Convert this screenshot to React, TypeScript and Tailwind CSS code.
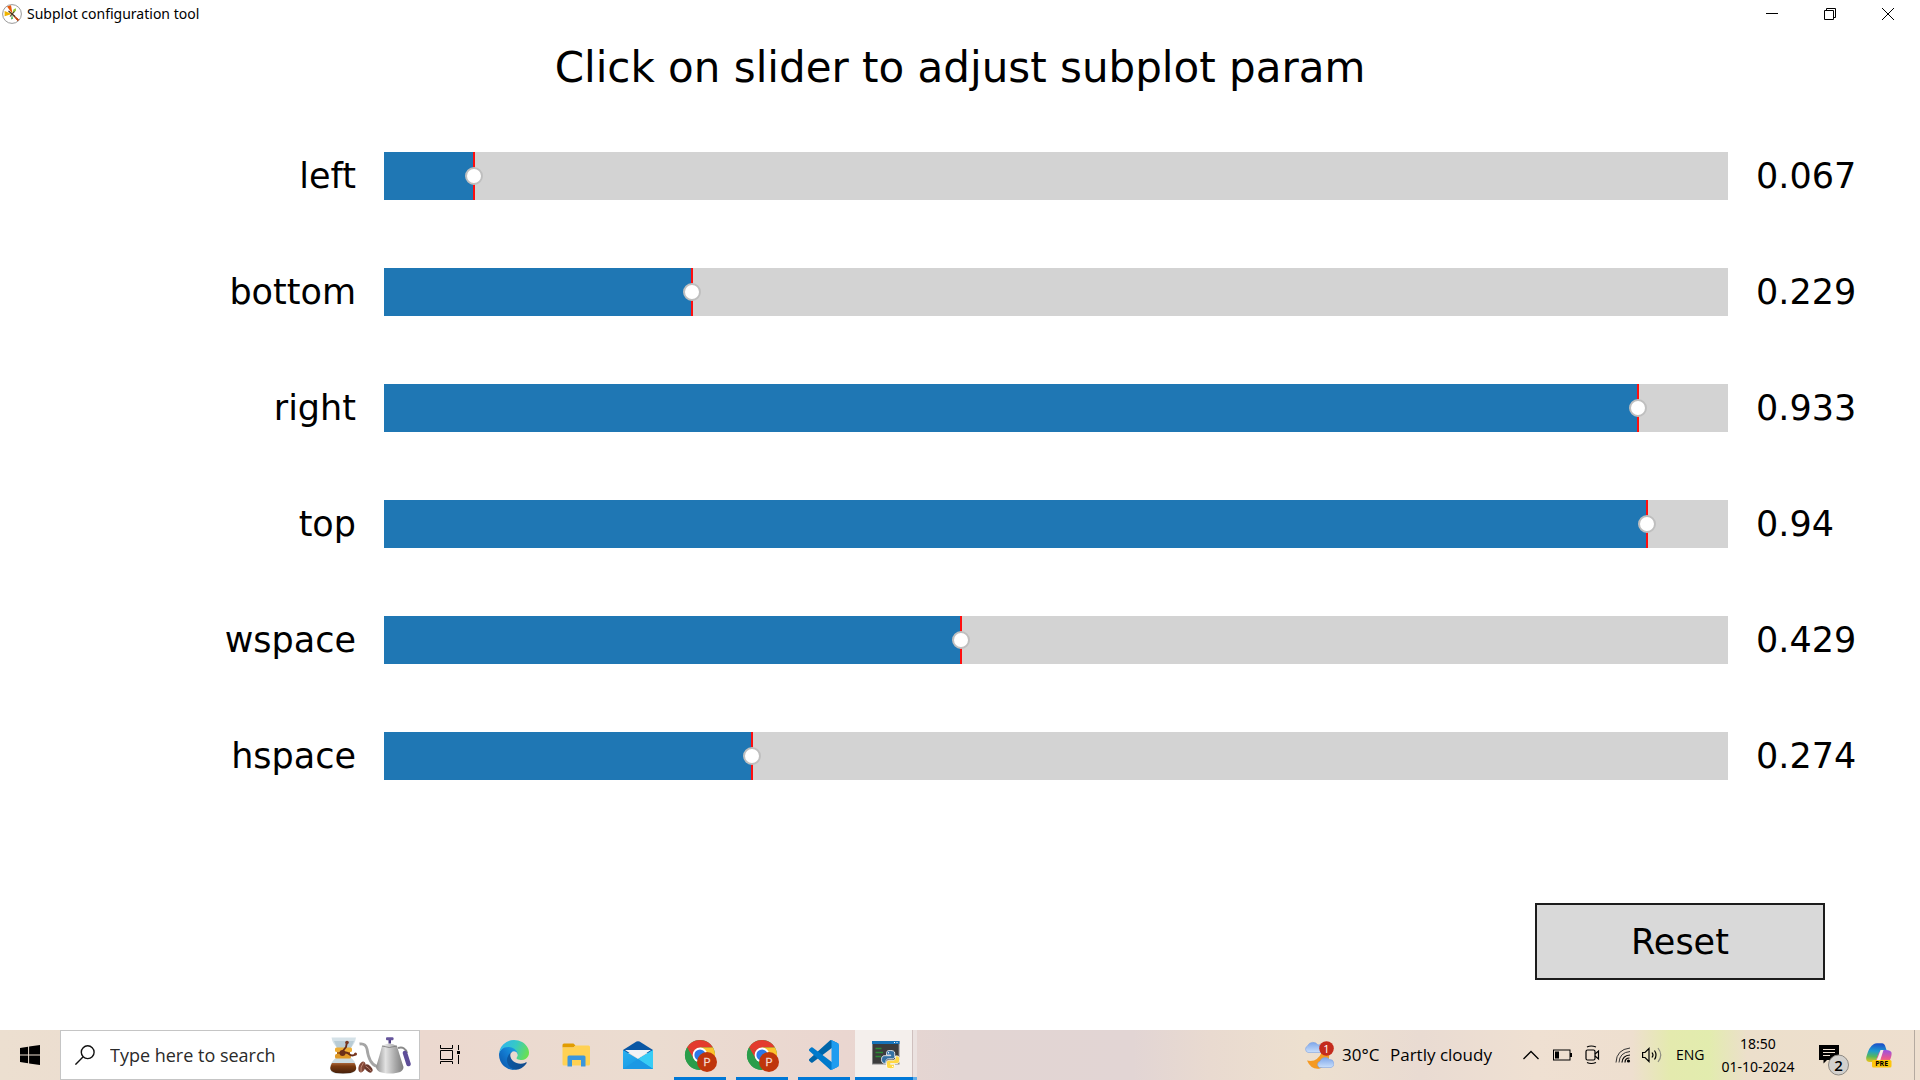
import { useState, type ReactNode } from "react";

const params = [
  { name: "left", initial: 0.067 },
  { name: "bottom", initial: 0.229 },
  { name: "right", initial: 0.933 },
  { name: "top", initial: 0.94 },
  { name: "wspace", initial: 0.429 },
  { name: "hspace", initial: 0.274 },
];

function SliderRow({
  name,
  initial,
  value,
  onChange,
}: {
  name: string;
  initial: number;
  value: number;
  onChange: (v: number) => void;
}) {
  return (
    <div className="grid grid-cols-[20%_70%_10%] items-center">
      <label htmlFor={name} className="pr-7 text-right">
        {name}
      </label>
      <div className="relative h-12 bg-[#d3d3d3]">
        <div className="h-full bg-[#1f77b4]" style={{ width: `${value * 100}%` }} />
        <div className="absolute inset-y-0 w-0.5 -translate-x-1/2 bg-[#ff0f0f]" style={{ left: `${initial * 100}%` }} />
        <input
          id={name}
          type="range"
          min={0}
          max={1}
          step={0.001}
          value={value}
          onChange={(e) => onChange(Number(e.target.value))}
          className="absolute inset-y-0 -left-[9px] w-[calc(100%+18px)] cursor-pointer appearance-none bg-transparent outline-none [&::-webkit-slider-thumb]:size-[18px] [&::-webkit-slider-thumb]:appearance-none [&::-webkit-slider-thumb]:rounded-full [&::-webkit-slider-thumb]:border-2 [&::-webkit-slider-thumb]:border-solid [&::-webkit-slider-thumb]:border-[#bfbfbf] [&::-webkit-slider-thumb]:bg-white"
        />
      </div>
      <output htmlFor={name} className="pl-7">
        {value}
      </output>
    </div>
  );
}

function MatplotlibIcon() {
  return (
    <svg viewBox="0 0 20 20" className="size-5">
      <circle cx="10" cy="10" r="9.4" fill="#fff" stroke="#8d8d8d" strokeWidth="0.9" />
      <path d="M10.500 10 5 2.600 9 1.200Z" fill="#e8590c" />
      <path d="M10 10 2.600 12.200 2.600 7Z" fill="#f0b400" />
      <path d="M10 10 11.600 5.200 14 4.200 14 6.800Z" fill="#9acd32" />
      <path d="M10 10 16.600 15.600 15.800 16.800Z" fill="#c0440c" stroke="#c0440c" strokeWidth="1" />
      <path d="M10 10 9 15.500 11 14.800Z" fill="#4caf50" />
      <path d="M6.500 7 13 12.500M12.500 7.500 8 12.500" stroke="#4a3320" strokeWidth="1.100" />
    </svg>
  );
}

function WindowsIcon() {
  return (
    <svg viewBox="0 0 20 20" className="size-5">
      <path d="M0 2.9 8.1 1.7V9.4H0ZM9.1 1.5 20 0V9.4H9.1ZM0 10.4H8.1V18.2L0 17.1ZM9.1 10.4H20V20L9.1 18.4Z" />
    </svg>
  );
}

function SearchIcon() {
  return (
    <svg viewBox="0 0 20 20" className="size-5" fill="none" stroke="#111" strokeWidth="1.4">
      <circle cx="12.7" cy="7.2" r="6.4" />
      <path d="M8.2 11.8.4 19.6" />
    </svg>
  );
}

function CoffeeArt() {
  return (
    <svg viewBox="0 0 82 37" className="h-[37px] w-[82px]">
      <defs>
        <linearGradient id="steel" x1="0" x2="1">
          <stop offset="0" stopColor="#8f8f8f" />
          <stop offset="0.35" stopColor="#e2e2e2" />
          <stop offset="0.7" stopColor="#a9a9a9" />
          <stop offset="1" stopColor="#7c7c7c" />
        </linearGradient>
        <linearGradient id="brew" x1="0" y1="0" x2="0" y2="1">
          <stop offset="0" stopColor="#a9653a" />
          <stop offset="0.3" stopColor="#7a3a10" />
          <stop offset="1" stopColor="#45200b" />
        </linearGradient>
      </defs>
      <path d="M2.500 .5H27Q26 7 21.500 11H8.500Q3.500 7 2.500 .5Z" fill="#d5e2e8" />
      <path d="M5 4H25L22 11H8Z" fill="#b9ccd5" />
      <path d="M8 20H21Q27 24 27 31 26 36 21 36.500H7Q1.500 36 1 31 2 24 8 20Z" fill="#cddce3" />
      <path d="M3 26H25.500Q28.500 31 26 34 23 36.500 14 36.500T2.500 34Q0 31 3 26Z" fill="url(#brew)" />
      <rect x="6" y="10.500" width="17" height="4.500" rx="1.500" fill="#efae35" />
      <path d="M8 15H21V18H8Z" fill="#a96518" />
      <rect x="6" y="17" width="16" height="4.500" rx="1.500" fill="#e09a28" />
      <path d="M18 5 17 10 13 15M11 16Q17 14 20 17T27 17" fill="none" stroke="#6b2f19" strokeWidth="1.800" />
      <circle cx="18" cy="5.500" r="1.800" fill="#7b3820" />
      <circle cx="13.500" cy="16" r="3" fill="#6b2f19" />
      <circle cx="26.500" cy="17" r="1.500" fill="#7b3820" />
      <ellipse cx="33" cy="30" rx="3.300" ry="5.600" fill="#834737" transform="rotate(20 33 30)" />
      <ellipse cx="39.500" cy="31.500" rx="3" ry="4.800" fill="#6b382c" transform="rotate(-45 39.500 31.500)" />
      <path d="M34.500 25.500Q31 30 32 35M36.500 29Q40 31 42.500 34.500" stroke="#d09a86" strokeWidth="0.800" fill="none" />
      <path d="M30.500 7Q36.500 6 38 12 40 27 48 29.500" fill="none" stroke="#a5a5a5" strokeWidth="2.800" />
      <path d="M53 9Q60 4 68 9 70 16 74.500 30 74.500 36.500 61 36.500T47 30Q51 17 53 9Z" fill="url(#steel)" />
      <path d="M53 9Q60 12 68 9" fill="none" stroke="#777" strokeWidth="0.800" />
      <rect x="59.500" y="2.500" width="2.500" height="4" fill="#4c3d80" />
      <rect x="57" y="0.300" width="7.500" height="3" rx="1" fill="#66559c" />
      <path d="M69 11Q76 9 78 16" fill="none" stroke="#8a8a8a" strokeWidth="2" />
      <path d="M76 16 79.500 27" stroke="#5e4e98" strokeWidth="4.500" strokeLinecap="round" />
    </svg>
  );
}

function TaskViewIcon() {
  return (
    <svg viewBox="0 0 20 20" className="size-5" fill="none" stroke="#000" strokeWidth="1">
      <path d="M.5 0V3.500H12.500V0M.5 19V16.500H12.500V19M.5 5.500H12.500V14.500H.5ZM18.500 0V5M18.500 10V19" />
      <rect x="17" y="6" width="3" height="3" fill="#000" stroke="none" />
    </svg>
  );
}

function EdgeIcon() {
  return (
    <svg viewBox="0 0 256 256" className="size-[30px]">
      <defs>
        <linearGradient id="eg1" x1="0" y1="0.5" x2="1" y2="0.5">
          <stop offset="0" stopColor="#0c59a4" />
          <stop offset="1" stopColor="#114a8b" />
        </linearGradient>
        <linearGradient id="eg2" x1="0.9" y1="0.2" x2="0.2" y2="0.9">
          <stop offset="0" stopColor="#1b9de2" />
          <stop offset="0.5" stopColor="#1279cf" />
          <stop offset="1" stopColor="#0c5cb0" />
        </linearGradient>
        <linearGradient id="eg3" x1="0" y1="0.3" x2="1" y2="0.6">
          <stop offset="0" stopColor="#2fb4ee" />
          <stop offset="0.5" stopColor="#36c9c6" />
          <stop offset="1" stopColor="#6be04f" />
        </linearGradient>
      </defs>
      <path d="M231 190.500c-3.400 1.800-6.900 3.400-10.500 4.700a101.700 101.700 0 0 1-35.900 6.500c-47.300 0-88.500-32.500-88.500-74.300a31.500 31.500 0 0 1 16.400-27.300c-42.800 1.800-53.800 46.400-53.800 72.500 0 73.900 68.100 81.400 82.800 81.400 7.900 0 19.800-2.300 27-4.600l1.300-.4a128.300 128.300 0 0 0 66.600-52.800 4 4 0 0 0-5.400-5.700Z" fill="url(#eg1)" />
      <path d="M105.700 241.400a79.200 79.200 0 0 1-22.700-21.300 80.700 80.700 0 0 1 29.500-120c3.200-1.500 8.500-4.100 15.600-4a32.400 32.400 0 0 1 25.700 13 31.900 31.900 0 0 1 6.300 18.700c0-.2 24.500-79.600-80-79.600C36.200 48.200 0 90 0 126.200a130.600 130.600 0 0 0 12.100 56 128 128 0 0 0 156.400 67.100 75.500 75.500 0 0 1-62.800-7.900Z" fill="url(#eg2)" />
      <path d="M152.300 148.900c-.8 1-3.300 2.500-3.300 5.700 0 2.600 1.700 5.100 4.700 7.200 14.400 10 41.500 8.700 41.600 8.700a59.600 59.600 0 0 0 30.300-8.300 61.400 61.400 0 0 0 30.400-52.900c.3-22.400-8-37.300-11.300-43.900C223.500 23.900 177.700 0 128 0A128 128 0 0 0 0 126.200c.5-36.500 36.800-66 80-66 3.500 0 23.500.3 42 10.100 16.300 8.600 24.900 18.900 30.800 29.200 6.200 10.700 7.300 24.100 7.300 29.500 0 5.300-2.700 13.300-7.800 19.900Z" fill="url(#eg3)" />
    </svg>
  );
}

function FolderIcon() {
  return (
    <svg viewBox="0 0 28 24" className="h-6 w-7">
      <path d="M.5 2Q.5.500 2 .5H11.500L13.500 2.500 11.500 4.500H.5Z" fill="#e19c00" />
      <path d="M.5 4.500H11.500L13.500 2.500H26.500Q28 2.500 28 4V21Q28 22.500 26.500 22.500H2Q.5 22.500.5 21Z" fill="#ffd154" />
      <path d="M5.500 23.500V14Q5.500 12.500 7 12.500H22Q23.500 12.500 23.500 14V23.500H19V17H10V23.500Z" fill="#3a96dd" />
    </svg>
  );
}

function MailIcon() {
  return (
    <svg viewBox="0 0 30 28" className="h-7 w-[30px]">
      <defs>
        <linearGradient id="mailBody" x1="0" y1="0" x2="1" y2="1">
          <stop offset="0" stopColor="#28b0f0" />
          <stop offset="1" stopColor="#1490df" />
        </linearGradient>
      </defs>
      <path d="M0 9 13.500.6Q15-.3 16.500.6L30 9V12H0Z" fill="#0a57a4" />
      <path d="M0 9 15 18 30 9V28H0Z" fill="url(#mailBody)" />
      <path d="M15 18 30 9V28Z" fill="#38ccf5" />
      <path d="M15 18 0 28H30Z" fill="#1b98e4" />
      <path d="M2 9H28L15 17.500Z" fill="#f1f3f6" />
    </svg>
  );
}

function ChromeIcon() {
  return (
    <svg viewBox="-1 -1 32 32" className="size-8 overflow-visible">
      <circle cx="15" cy="15" r="15" fill="#2a9d4a" />
      <path d="M15 15 2 7.500A15 15 0 0 1 28 7.500H15Z" fill="#e33b2e" />
      <path d="M15 7.500H28A15 15 0 0 1 15 30L21.500 18.700Z" fill="#fcc42c" />
      <path d="M2 7.500 8.500 18.700 15 15Z" fill="#e33b2e" />
      <path d="M2 7.500A15 15 0 0 0 15 30L21.500 18.700 8.500 18.700Z" fill="#2a9d4a" />
      <circle cx="15" cy="15" r="7.400" fill="#fff" />
      <circle cx="15" cy="15" r="5.600" fill="#2b78e8" />
      <circle cx="22" cy="22" r="10" fill="#bf360c" />
      <text x="22" y="26" textAnchor="middle" fontSize="11" fill="#f6d5ca" stroke="#f6d5ca" strokeWidth="0.3" fontFamily="Roboto, sans-serif">
        P
      </text>
    </svg>
  );
}

function VsCodeIcon() {
  return (
    <svg viewBox="0 0 100 100" className="size-[30px]">
      <path d="M96.500 10.800 75.900.9a6.200 6.200 0 0 0-7.100 1.200L1.300 63.600a4.200 4.200 0 0 0 0 6.200l5.500 5a4.200 4.200 0 0 0 5.300.2L93.400 13.400c2.700-2.100 6.600-.1 6.600 3.300v-.3a6.200 6.200 0 0 0-3.500-5.600Z" fill="#0065a9" />
      <path d="m96.500 89.200-20.600 9.900a6.200 6.200 0 0 1-7.100-1.200L1.300 36.400a4.200 4.200 0 0 1 0-6.200l5.500-5a4.200 4.200 0 0 1 5.300-.2l81.300 61.600c2.700 2.100 6.600.1 6.600-3.300v.3a6.200 6.200 0 0 1-3.500 5.600Z" fill="#007acc" />
      <path d="M75.900 99.100a6.200 6.200 0 0 1-7.100-1.200c2.300 2.300 6.200.7 6.200-2.600V4.700c0-3.300-3.900-4.900-6.200-2.600A6.200 6.200 0 0 1 75.900.9l20.600 9.900A6.200 6.200 0 0 1 100 16.400v67.200c0 2.400-1.400 4.600-3.500 5.600Z" fill="#1f9cf0" />
    </svg>
  );
}

function PythonIcon() {
  return (
    <svg viewBox="0 0 28 28" className="size-7">
      <rect x="0.500" y="0.500" width="26.500" height="22.500" fill="#3c3c3c" stroke="#858585" />
      <rect x="0" y="0" width="27.500" height="3" fill="#1672b8" />
      <path d="M22 1.500H23M24.500 1.500H25.500" stroke="#fff" />
      <path d="M3.500 7.500H9.500M3.500 11.500H11M3.500 15.500H9" stroke="#2c8c34" strokeWidth="1.300" />
      <g transform="translate(9 9)" stroke="#fff" strokeWidth="0.800">
        <path d="M9.300.5C5.500.5 5.500 2 5.500 3.200V5H9.700V5.700H3.200C1.200 5.700.5 7.500.5 9.500S1.300 13.300 3.200 13.300H5V11.200C5 9.600 6.300 8.800 7.500 8.800H11.300C12.800 8.800 13.700 7.800 13.700 6.500V3.200C13.700 1.200 12 .5 9.300.5Z" fill="#3470a2" />
        <path d="M9.700 18.700C13.500 18.700 13.500 17.200 13.500 16V14.200H9.500V13.500H16C18 13.500 18.700 11.700 18.700 9.700S17.900 5.900 16 5.900H14.500V8C14.500 9.600 13.200 10.200 12 10.200H8C6.500 10.200 5.500 11.200 5.500 12.500V16C5.500 18 7 18.700 9.700 18.700Z" fill="#ffd845" />
        <circle cx="7.500" cy="2.800" r="0.700" fill="#fff" stroke="none" />
        <circle cx="11.700" cy="16.400" r="0.700" fill="#fff" stroke="none" />
      </g>
    </svg>
  );
}

function WeatherIcon() {
  return (
    <svg viewBox="0 0 30 28" className="h-7 w-[30px]">
      <defs>
        <linearGradient id="cloud" x1="0" y1="0" x2="0" y2="1">
          <stop offset="0" stopColor="#7ea6ea" />
          <stop offset="1" stopColor="#c9dffb" />
        </linearGradient>
      </defs>
      <path d="M3 19.500Q13 22 18 11L25 13A13 13 0 0 1 16 27.500Q7 29 3 19.500Z" fill="#f59a23" />
      <path d="M4 11.500A3.500 3.500 0 0 1 3.500 5 6 6 0 0 1 14 4 4 4 0 0 1 17 11.500Z" fill="url(#cloud)" stroke="#7fa3e0" strokeWidth="0.600" />
      <path d="M15.500 26.500A3.300 3.300 0 0 1 16 20.300 5.500 5.500 0 0 1 25.500 18.500 4.100 4.100 0 0 1 27 26.500Z" fill="url(#cloud)" stroke="#7fa3e0" strokeWidth="0.600" />
      <circle cx="22.500" cy="7.500" r="7.300" fill="#c42b1c" />
      <text x="22.500" y="11.500" textAnchor="middle" fontSize="11" fill="#fff" fontFamily="'Open Sans', sans-serif">
        1
      </text>
    </svg>
  );
}

function BatteryIcon() {
  return (
    <svg viewBox="0 0 19 12" className="h-3 w-[19px]">
      <rect x="0.500" y="1" width="16.500" height="10" fill="none" stroke="#000" />
      <rect x="17" y="4" width="2" height="4" />
      <rect x="2" y="2.500" width="4" height="7" />
    </svg>
  );
}

function MeetIcon() {
  return (
    <svg viewBox="0 0 15 20" className="h-5 w-[15px]" fill="none" stroke="#000" strokeWidth="1.200">
      <rect x="1" y="5" width="9" height="10" rx="1.500" />
      <path d="M10 9 13.500 6V14L10 11M2 2Q6 0 11 2M2 17.500Q6 19.500 11 17.500" />
    </svg>
  );
}

function WifiIcon() {
  return (
    <svg viewBox="0 0 16 16" className="size-4" fill="none" stroke="#000" strokeWidth="1.200">
      <path d="M10 15.500Q10 11 14.500 11M7 15.500Q7.500 8.500 15 8" />
      <path d="M4 15.500Q4.500 5.500 15 4.500M1 15.500Q1.500 2.500 15 1" stroke="#333" strokeWidth="1" />
      <circle cx="13.500" cy="14" r="1.600" fill="#000" stroke="none" />
    </svg>
  );
}

function VolumeIcon() {
  return (
    <svg viewBox="0 0 20 16" className="h-4 w-5" fill="none" stroke="#000" strokeWidth="1.200">
      <path d="M.6 5.500H3L7 1.500V14.500L3 10.500H.6ZM10 5.500Q12 8 10 10.500M12.500 3.500Q15.500 8 12.500 12.500" />
      <path d="M16 1Q21.500 8 16 15" stroke="#8c8c80" />
    </svg>
  );
}

function NotificationIcon() {
  return (
    <svg viewBox="0 -10 30 42" className="h-[42px] w-[30px]">
      <path d="M0 1H20V16H8L4.500 19.500V16H0Z" />
      <path d="M4 5.500H16M4 8.500H16M4 11.500H11" stroke="#efe2d3" strokeWidth="1" />
      <circle cx="19.500" cy="21" r="10" fill="#d2d0cd" stroke="#8d8983" strokeWidth="1" />
      <text x="19.500" y="26.500" textAnchor="middle" fontSize="15" fontWeight="600" fontFamily="'Open Sans', sans-serif">
        2
      </text>
    </svg>
  );
}

function CopilotIcon() {
  return (
    <svg viewBox="0 0 26 25" className="h-[25px] w-[26px]">
      <defs>
        <linearGradient id="cpA" x1="0.300" y1="0" x2="0.200" y2="1">
          <stop offset="0" stopColor="#1b52c9" />
          <stop offset="0.400" stopColor="#1d9bd0" />
          <stop offset="0.700" stopColor="#57b85c" />
          <stop offset="1" stopColor="#e9c51e" />
        </linearGradient>
        <linearGradient id="cpB" x1="0.500" y1="0" x2="0.400" y2="1">
          <stop offset="0" stopColor="#9a52e0" />
          <stop offset="0.600" stopColor="#e9578f" />
          <stop offset="1" stopColor="#f98a5c" />
        </linearGradient>
      </defs>
      <path d="M13 7H20Q24.500 7 25.500 9.500 26 12 24 17 23 20 19 20H9Z" fill="url(#cpB)" />
      <path d="M8 1Q9 .3 11 .3H16Q18.500.3 19.500 4L20.500 7H17Q13.500 7 12.500 10.500L10.500 16Q9.500 19 6 19H3Q-.5 18.500.3 14 3 3.500 8 1Z" fill="url(#cpA)" />
      <path d="M14.500 7H17.500L14 18H9Q11 17.500 12 14Z" fill="#f7ece6" />
      <rect x="6" y="17" width="19.500" height="7.500" rx="1.500" fill="#fdc60b" />
      <text x="15.700" y="23.300" textAnchor="middle" fontSize="7" fontWeight="700" fontFamily="'Open Sans', sans-serif">
        PRE
      </text>
    </svg>
  );
}

function TaskButton({ label, state, children }: { label: string; state?: "open" | "active"; children: ReactNode }) {
  return (
    <button
      aria-label={label}
      className={
        state === "active"
          ? "relative flex w-[62px] items-center justify-center bg-[#f4efec]"
          : "relative flex w-[62px] items-center justify-center"
      }
    >
      {children}
      {state === "open" && <span className="absolute inset-x-[5px] bottom-0 h-[3px] bg-[#0078d7]" />}
      {state === "active" && (
        <>
          <span className="absolute inset-y-0 right-0 w-[5px] border-l border-[#cfc0be] bg-[#ebe2e0]" />
          <span className="absolute inset-x-0 bottom-0 h-[3px] border-r-4 border-[#66aee7] bg-[#0078d7]" />
        </>
      )}
    </button>
  );
}

export default function App() {
  const [values, setValues] = useState(params.map((p) => p.initial));

  return (
    <div className="flex min-h-screen flex-col bg-white text-black">
      <header className="flex h-7 items-center pl-0.5 font-['Noto_Sans',sans-serif]">
        <MatplotlibIcon />
        <h1 className="ml-[5px] text-[14px] leading-5">Subplot configuration tool</h1>
        <div className="ml-auto flex self-stretch pr-[3px]">
          <button aria-label="Minimize" className="flex w-[58px] items-center justify-center">
            <svg viewBox="0 0 12 12" className="size-3" stroke="#000">
              <path d="M0 5.500H12" />
            </svg>
          </button>
          <button aria-label="Restore" className="flex w-[58px] items-center justify-center">
            <svg viewBox="0 0 12 12" className="size-3" fill="none" stroke="#000">
              <path d="M.5 2.500H9.500V11.500H.5ZM2.500 2.500V.5H11.500V9.500H9.500" />
            </svg>
          </button>
          <button aria-label="Close" className="flex w-[58px] items-center justify-center">
            <svg viewBox="0 0 12 12" className="size-3" stroke="#000">
              <path d="M0 0 12 12M12 0 0 12" />
            </svg>
          </button>
        </div>
      </header>

      <main className="flex flex-1 flex-col font-['DejaVu_Sans',sans-serif] text-[35px] leading-12">
        <h2 className="pt-4 text-center text-[42px] leading-12">Click on slider to adjust subplot param</h2>
        <div className="mt-15 flex flex-col gap-[68px]">
          {params.map((p, i) => (
            <SliderRow
              key={p.name}
              name={p.name}
              initial={p.initial}
              value={values[i]}
              onChange={(v) => setValues(values.map((old, j) => (j === i ? v : old)))}
            />
          ))}
        </div>
        <div className="mt-auto flex justify-end pr-[95px] pb-[50px]">
          <button
            onClick={() => setValues(params.map((p) => p.initial))}
            className="h-[77px] w-[290px] border-2 border-[#1c1c1c] bg-[#d9d9d9]"
          >
            Reset
          </button>
        </div>
      </main>

      <footer className="flex h-[50px] bg-[linear-gradient(90deg,#ecdfd0_0%,#ebd8cf_22%,#ebdcd0_34%,#ead6d0_44%,#e2d5d3_50%,#e2d5d4_59%,#e9dad0_63%,#ede0cf_68%,#e9dbd2_74%,#efe0d2_80%,#eedfcf_85%,#e4eaae_87%,#e2ecae_89%,#ecdfcb_91%,#eedfcf_100%)] font-['Open_Sans',sans-serif]">
        <button aria-label="Start" className="flex w-[60px] items-center justify-center">
          <WindowsIcon />
        </button>
        <label className="flex w-[360px] items-center border border-[#c5c5c5] bg-white pr-2 pl-[14px]">
          <SearchIcon />
          <input
            type="text"
            aria-label="Search"
            placeholder="Type here to search"
            className="ml-[15px] w-0 flex-1 bg-transparent text-[18px] leading-6 outline-none placeholder:text-[#2a2a2a]"
          />
          <CoffeeArt />
        </label>
        <button aria-label="Task view" className="flex w-[63px] items-center pl-5">
          <TaskViewIcon />
        </button>
        <TaskButton label="Microsoft Edge">
          <EdgeIcon />
        </TaskButton>
        <TaskButton label="File Explorer">
          <FolderIcon />
        </TaskButton>
        <TaskButton label="Mail">
          <MailIcon />
        </TaskButton>
        <TaskButton label="Google Chrome, window 1" state="open">
          <ChromeIcon />
        </TaskButton>
        <TaskButton label="Google Chrome, window 2" state="open">
          <ChromeIcon />
        </TaskButton>
        <TaskButton label="Visual Studio Code" state="open">
          <VsCodeIcon />
        </TaskButton>
        <TaskButton label="Python" state="active">
          <PythonIcon />
        </TaskButton>

        <div className="ml-auto flex items-center">
          <button className="flex items-center text-[17px] leading-6">
            <WeatherIcon />
            <span className="ml-2 w-[48px] text-left">30°C</span>
            <span className="w-[133px] text-left">Partly cloudy</span>
          </button>
          <button aria-label="Show hidden icons" className="w-[30px]">
            <svg viewBox="0 0 16 10" className="h-[10px] w-4" fill="none" stroke="#000" strokeWidth="1.300">
              <path d="M.5 9 8 1.500 15.500 9" />
            </svg>
          </button>
          <button aria-label="Battery" className="w-8">
            <BatteryIcon />
          </button>
          <button aria-label="Meet now" className="w-[30px]">
            <MeetIcon />
          </button>
          <button aria-label="Network" className="w-[27px]">
            <WifiIcon />
          </button>
          <button aria-label="Volume" className="w-[34px]">
            <VolumeIcon />
          </button>
          <button className="w-[42px] text-left text-[14px] leading-6">ENG</button>
          <button className="w-20 text-center font-['Noto_Sans',sans-serif] text-[14px] leading-[23px]">
            <time>
              18:50
              <br />
              01-10-2024
            </time>
          </button>
          <button aria-label="Notifications" className="ml-[21px] w-[47px]">
            <NotificationIcon />
          </button>
          <button aria-label="Copilot" className="w-12">
            <CopilotIcon />
          </button>
          <div className="h-[50px] w-[6px] border-l border-[#b5aaa0]" />
        </div>
      </footer>
    </div>
  );
}
